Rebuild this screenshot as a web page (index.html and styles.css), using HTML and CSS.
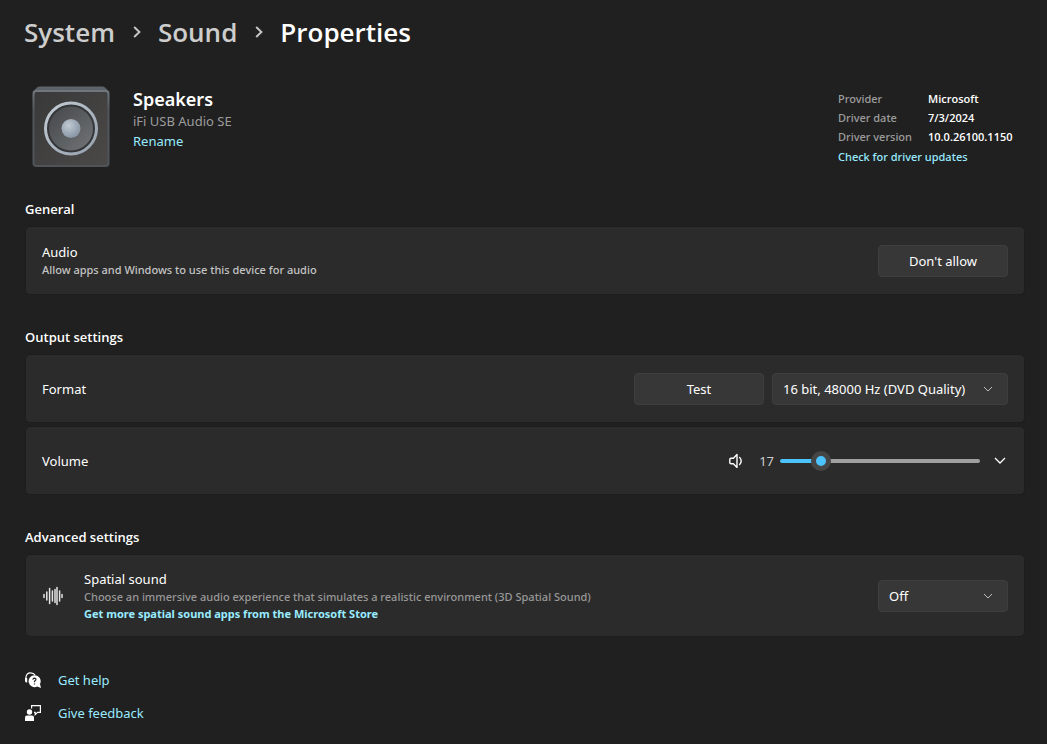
FILE: index.html
```html
<!DOCTYPE html>
<html lang="en">
<head>
<meta charset="utf-8">
<meta name="viewport" content="width=device-width, initial-scale=1">
<title>Properties</title>
<link rel="stylesheet" href="styles.css">
</head>
<body>
<main class="page">
  <nav class="breadcrumb" aria-label="Breadcrumb">
    <a class="crumb" href="#system">System</a>
    <svg class="crumb-sep" viewBox="0 0 10 14"><path d="M2.2 2 7.4 7 2.2 12"/></svg>
    <a class="crumb" href="#sound">Sound</a>
    <svg class="crumb-sep" viewBox="0 0 10 14"><path d="M2.2 2 7.4 7 2.2 12"/></svg>
    <h1 class="crumb crumb-current">Properties</h1>
  </nav>

  <header class="device">
    <svg class="device-icon" viewBox="0 0 78 82" aria-hidden="true">
      <defs>
        <linearGradient id="top" x1="0" y1="0" x2="0" y2="1"><stop offset="0" stop-color="#60666b"/><stop offset="1" stop-color="#4d5358"/></linearGradient>
        <linearGradient id="face" x1="0" y1="0" x2="1" y2="1"><stop offset="0" stop-color="#393939"/><stop offset="1" stop-color="#4b4948"/></linearGradient>
        <linearGradient id="edge" x1="0" y1="0" x2="0" y2="1"><stop offset="0" stop-color="#70777e"/><stop offset=".25" stop-color="#51565b"/><stop offset="1" stop-color="#4f5459"/></linearGradient>
        <linearGradient id="ring" x1="0" y1="0" x2="1" y2="1"><stop offset="0" stop-color="#c3ccd5"/><stop offset="1" stop-color="#95a1ad"/></linearGradient>
        <linearGradient id="cone" x1="0" y1="0" x2="1" y2="1"><stop offset="0" stop-color="#454749"/><stop offset=".5" stop-color="#5a5d60"/><stop offset="1" stop-color="#737578"/></linearGradient>
        <radialGradient id="dome" cx=".38" cy=".35" r=".7"><stop offset="0" stop-color="#c0cad4"/><stop offset="1" stop-color="#8592a0"/></radialGradient>
      </defs>
      <path d="M1 5.5 5 1.5Q6 .5 8 .5H70Q72 .5 73 1.5L77 5.5V12H1Z" fill="url(#top)"/>
      <rect x="1.5" y="5" width="75" height="75" rx="3" fill="url(#face)" stroke="url(#edge)" stroke-width="2"/>
      <circle cx="39" cy="42.5" r="25.5" fill="#343638" stroke="url(#ring)" stroke-width="3"/>
      <circle cx="39" cy="42.5" r="22" fill="url(#cone)"/>
      <circle cx="39" cy="42.5" r="9.5" fill="url(#dome)"/>
    </svg>
    <div class="device-text">
      <h2 class="device-name">Speakers</h2>
      <p class="device-model">iFi USB Audio SE</p>
      <a class="link" href="#rename">Rename</a>
    </div>
    <div class="driver">
      <dl class="driver-list">
        <dt>Provider</dt><dd>Microsoft</dd>
        <dt>Driver date</dt><dd>7/3/2024</dd>
        <dt>Driver version</dt><dd>10.0.26100.1150</dd>
      </dl>
      <a class="link link-small" href="#updates">Check for driver updates</a>
    </div>
  </header>

  <section class="section">
    <h2 class="section-title">General</h2>
    <div class="card">
      <div class="card-text">
        <h3 class="label">Audio</h3>
        <p class="hint">Allow apps and Windows to use this device for audio</p>
      </div>
      <button class="button" type="button">Don't allow</button>
    </div>
  </section>

  <section class="section">
    <h2 class="section-title">Output settings</h2>
    <div class="card">
      <label class="label card-text" for="format">Format</label>
      <button class="button" type="button">Test</button>
      <div class="dropdown dropdown-wide">
        <select class="select" id="format"><option>16 bit, 48000 Hz (DVD Quality)</option></select>
        <svg class="dropdown-arrow" viewBox="0 0 10 6"><path d="M1 1 5 5 9 1"/></svg>
      </div>
    </div>
    <div class="card">
      <label class="label card-text" for="volume">Volume</label>
      <div class="volume">
        <button class="icon-button" type="button" aria-label="Mute">
          <svg class="volume-icon" viewBox="0 0 16 16"><path d="M9 1.6V14.4L5.4 10.8H3Q1.8 10.8 1.8 9.6V6.4Q1.8 5.2 3 5.2H5.4ZM11.6 4.4Q14.8 8 11.6 11.6"/></svg>
        </button>
        <output class="volume-value" for="volume">17</output>
        <input class="slider" id="volume" type="range" min="0" max="100" value="17">
        <button class="icon-button expand" type="button" aria-label="Expand volume">
          <svg class="expand-icon" viewBox="0 0 12 7"><path d="M1 1 6 6 11 1"/></svg>
        </button>
      </div>
    </div>
  </section>

  <section class="section">
    <h2 class="section-title">Advanced settings</h2>
    <div class="card card-tall">
      <svg class="card-icon" viewBox="0 0 20 20" aria-hidden="true"><path d="M1 8.5V11.5M3.8 6V14M6.6 2.5V17.5M9.4 5V15M12 3.5V16.5M14 1.5V18.5M16.6 5V15M19 8.5V11.5"/></svg>
      <div class="card-text">
        <label class="label" for="spatial">Spatial sound</label>
        <p class="hint hint-dim">Choose an immersive audio experience that simulates a realistic environment (3D Spatial Sound)</p>
        <a class="link link-small link-strong" href="#store">Get more spatial sound apps from the Microsoft Store</a>
      </div>
      <div class="dropdown">
        <select class="select" id="spatial"><option>Off</option></select>
        <svg class="dropdown-arrow" viewBox="0 0 10 6"><path d="M1 1 5 5 9 1"/></svg>
      </div>
    </div>
  </section>

  <footer class="support">
    <a class="support-link link" href="#help">
      <svg class="support-icon" viewBox="0 0 16 16" aria-hidden="true"><path d="M1 8V5Q1.6 .8 5.4 .8Q8.8 .8 10 3" fill="none" stroke="#fff" stroke-width="1.2"/><path d="M0 6H2.2V10.4H1.4Q0 10.4 0 9Z" fill="#fff"/><path d="M9.5 3.2A6 6 0 1 0 12.2 14.6L16 16 15 12A6 6 0 0 0 9.5 3.2Z" fill="#fff"/><path d="M7.9 7.7Q8 6.2 9.5 6.2Q11 6.3 11 7.6Q11 8.4 9.5 9.3V10.3M9.5 11.4V12.6" fill="none" stroke="#202020" stroke-width="1.2"/></svg>
      <span>Get help</span>
    </a>
    <a class="support-link link" href="#feedback">
      <svg class="support-icon" viewBox="0 0 16 16" aria-hidden="true"><circle cx="4.5" cy="7" r="2.7" fill="#fff"/><path d="M0 16V12.5Q0 10.6 2 10.6H7Q9 10.6 9 12.5V16Z" fill="#fff"/><path d="M6.6 3.6V.6H15.4V7.4H12.6L10.2 9.6V7.4H9" fill="none" stroke="#fff" stroke-width="1.2"/></svg>
      <span>Give feedback</span>
    </a>
  </footer>
</main>
</body>
</html>
```
FILE: styles.css
```css
* { box-sizing: border-box; }
body {
  margin: 0;
  background: #202020;
  color: #fff;
  font: 400 13px/20px "Noto Sans", "Open Sans", sans-serif;
}
h1, h2, h3, p, dl, dd { margin: 0; }
.page { padding: 12px 22px 20px 25px; }

.breadcrumb { display: flex; align-items: center; height: 40px; margin-left: -1px; }
.crumb { font-family: "Open Sans", sans-serif; font-size: 26px; line-height: 40px; font-weight: 600; color: #cdcdcd; text-decoration: none; }
.crumb-current { color: #fff; }
.crumb-sep { width: 10px; height: 14px; margin: 0 16px 0 17px; fill: none; stroke: #c4c4c4; stroke-width: 2; }

.device { display: flex; align-items: flex-start; margin-top: 34px; padding-left: 7px; height: 82px; }
.device-icon { width: 78px; height: 82px; }
.device-text { flex: 1; margin-left: 23px; display: flex; flex-direction: column; align-items: flex-start; }
.device-name { font-size: 18px; line-height: 26px; font-weight: 600; }
.device-model { color: #9d9d9d; line-height: 18px; }
.link { color: #99ebff; text-decoration: none; }
.device-text .link { line-height: 22px; }
.driver { width: 187px; padding-top: 3px; font-size: 11px; font-weight: 500; }
.driver-list { display: grid; grid-template-columns: 90px 1fr; line-height: 19px; margin-bottom: 1px; }
.driver-list dt { color: #9d9d9d; }
.driver-list dd { font-family: "Open Sans", sans-serif; font-weight: 600; }
.link-small { display: block; font-size: 11px; font-weight: 500; }
.link-strong { font-weight: 700; }

.section { margin-top: 32px; display: flex; flex-direction: column; gap: 3px; }
.device + .section { margin-top: 31px; }
.section-title { font-family: "Open Sans", sans-serif; font-size: 13px; font-weight: 600; line-height: 20px; margin-bottom: 4px; }
.card {
  display: flex;
  align-items: center;
  gap: 8px;
  min-height: 69px;
  padding: 0 16px;
  background: #2b2b2b;
  border: 1px solid #1d1d1d;
  border-radius: 5px;
}
.card-tall { min-height: 83px; }
.card-text { flex: 1; }
.card-icon { width: 20px; height: 20px; margin: 0 13px 0 1px; fill: none; stroke: #e6e6e6; stroke-width: 1.5; stroke-linecap: round; }
.label { display: block; font-size: 13px; font-weight: 400; line-height: 18px; }
.hint { font-size: 11px; font-weight: 500; line-height: 17px; color: #c4c4c4; }
.hint-dim { color: #989898; }
.card-text .link { line-height: 17px; }

.button, .select {
  width: 130px;
  height: 32px;
  border: 1px solid #3e3e3e;
  border-radius: 4px;
  background: #373737;
  color: #fff;
  font: inherit;
}
.dropdown { position: relative; width: 130px; }
.dropdown-wide { width: 236px; }
.select { appearance: none; width: 100%; padding: 0 32px 0 10px; }
.dropdown-arrow {
  position: absolute;
  right: 15px;
  top: 13px;
  width: 10px;
  height: 6px;
  fill: none;
  stroke: #bdbdbd;
  pointer-events: none;
}

.volume { display: flex; align-items: center; padding-right: 2px; }
.icon-button { display: flex; padding: 0; border: 0; background: none; }
.volume-icon { width: 16px; height: 16px; fill: none; stroke: #fff; stroke-width: 1.4; stroke-linejoin: round; stroke-linecap: round; }
.volume-value { width: 30px; padding-right: 6px; text-align: right; color: #cecece; margin-left: 6px; }
.slider { appearance: none; width: 200px; height: 20px; margin: 0; background: none; }
.slider::-webkit-slider-runnable-track {
  height: 4px;
  border-radius: 2px;
  background: linear-gradient(to right, #4cc2ff 20%, #9f9f9f 20%);
}
.slider::-webkit-slider-thumb {
  appearance: none;
  width: 20px;
  height: 20px;
  margin-top: -8px;
  border: 5px solid #454545;
  border-radius: 50%;
  background: #4cc2ff;
}
.expand { margin-left: 14px; }
.expand-icon { width: 12px; height: 7px; fill: none; stroke: #fff; stroke-width: 1.3; }

.support { display: flex; flex-direction: column; align-items: flex-start; gap: 13px; margin-top: 33px; }
.support-link { display: flex; align-items: center; gap: 17px; }
.support-icon { width: 16px; height: 16px; }
```
